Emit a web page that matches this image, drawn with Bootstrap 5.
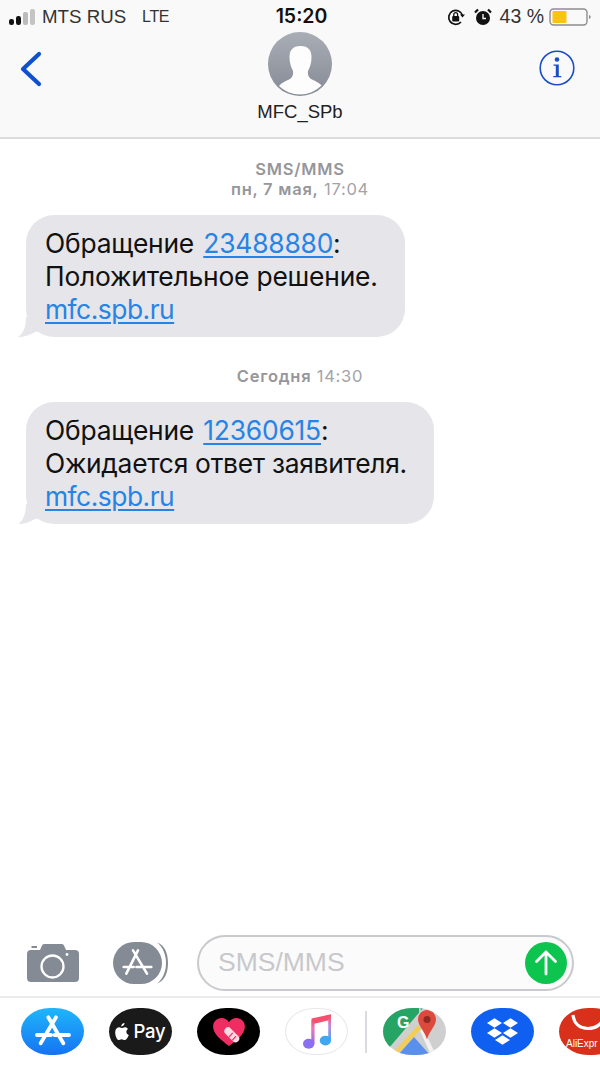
<!DOCTYPE html>
<html lang="ru">
<head>
    <meta charset="UTF-8">
    <meta name="viewport" content="width=device-width, initial-scale=1.0">
    <title>MFC_SPb</title>
    <link href="https://cdn.jsdelivr.net/npm/bootstrap@5.3.0/dist/css/bootstrap.min.css" rel="stylesheet">
    <style>
        html, body { margin: 0; height: 1066px; overflow: hidden; background: #fff; }
        body { font-family: "Liberation Sans", Arial, sans-serif; color: #000; }
        .phone { height: 1066px; width: 600px; }
        .top-head { background: #f9f9f9; height: 139px; border-bottom: 2px solid #dcdcdc; }
        .status-row { height: 32px; display: grid; grid-template-columns: 1fr auto 1fr; align-items: center; font-size: 18.7px; color: #333; padding: 2px 9px 0 9px; }
        .carrier { gap: 4px; }
        .lte { margin-left: 12px; font-size: 16px; letter-spacing: -.4px; }
        .clock { font-family: Inter, "Liberation Sans", sans-serif; font-weight: 600; font-size: 19.5px; color: #111; padding-left: 3px; }
        .stat-right { justify-content: flex-end; }
        .percent { font-size: 19.5px; margin-right: 5px; }
        .head-row { height: 105px; display: grid; grid-template-columns: 1fr auto 1fr; padding: 0 26px; }
        .who { font-size: 18.5px; color: #222; line-height: 22px; }
        .avatar-pic { display: block; margin: 0 auto 5px; }
        .chat { padding: 20px 0 0 0; }
        .stamp { font-family: Inter, "Liberation Sans", sans-serif; font-size: 16.5px; line-height: 20px; color: #a3a3a8; text-align: center; letter-spacing: .75px; }
        .stamp b { font-weight: 600; color: #96969b; }
        .bubble-wrap { position: relative; margin-left: 26px; width: fit-content; }
        .bubble-text { background: #e5e5ea; border-radius: 28px; padding: 12px 27px 11px 19px; font-size: 26.4px; line-height: 33px; color: #111; font-family: Inter, "Liberation Sans", sans-serif; letter-spacing: -.2px; white-space: nowrap; }
        .bubble-text a { color: #2584e6; text-decoration: underline; text-underline-offset: 3px; text-decoration-thickness: 1.5px; }
        .bubble-text a.site-link { letter-spacing: -.5px; }
        .bubble-text a.ref-num { margin-left: 2px; }
        .tight-line { letter-spacing: -.28px; }
        .tail { position: absolute; left: -9px; bottom: 0; }
        .compose { height: 62px; padding: 0 26px 5px 27px; }
        .composer { width: 377px; height: 56px; border: 2px solid #c9c9ce; border-radius: 28px; background: #fbfbfb; margin-left: 28px; padding: 0 5px 0 19px; font-size: 26.5px; color: #c8c8cc; }
        .dock { border-top: 2px solid #ebebeb; height: 70px; padding: 10px 0 0 21px; gap: 25px; overflow: hidden; }
        .dock-pill { width: 63px; height: 47px; border-radius: 29px / 23.5px; flex: 0 0 auto; overflow: hidden; display: flex; align-items: center; justify-content: center; }
        .pay-text { font-family: Inter, "Liberation Sans", sans-serif; color: #fff; font-size: 18.5px; font-weight: 500; letter-spacing: -.2px; }
        .dock-sep { width: 2px; height: 42px; background: #d9dbe0; margin: 3px -9px 0 -8px; flex: 0 0 auto; }
    </style>
</head>
<body>
<div class="phone d-flex flex-column">

    <!-- header -->
    <header class="top-head">
        <div class="status-row">
            <div class="d-flex align-items-center carrier">
                <svg width="29" height="20" viewBox="0 0 29 20"><rect x="0" y="12" width="5" height="6" rx="2.2" fill="#111"/><rect x="7" y="9" width="5" height="9" rx="2.2" fill="#111"/><rect x="14" y="5" width="5" height="13" rx="2" fill="#bbb"/><rect x="21" y="2" width="5" height="16" rx="2" fill="#c4c4c4"/></svg>
                <span>MTS RUS</span><span class="lte">LTE</span>
            </div>
            <div class="clock">15:20</div>
            <div class="d-flex align-items-center stat-right">
                <svg width="20" height="20" viewBox="0 0 20 20" class="me-2"><path d="M16.5 8.5a7 7 0 1 0-1.5 6.500" fill="none" stroke="#111" stroke-width="1.700"/><path d="M14 7.500h5l-2.500 3z" fill="#111"/><rect x="6.200" y="9" width="7" height="5.500" rx="1" fill="#111"/><path d="M7.800 9V7.500a1.900 1.900 0 0 1 3.800 0V9" fill="none" stroke="#111" stroke-width="1.300"/></svg>
                <svg width="18" height="18" viewBox="0 0 18 18" class="me-2"><circle cx="9" cy="10" r="7" fill="#111"/><path d="M9 6v4.500h3" fill="none" stroke="#fff" stroke-width="1.300"/><path d="M1 4.500 4 1.500M17 4.500l-3-3" stroke="#111" stroke-width="2.200"/></svg>
                <span class="percent">43 %</span>
                <svg width="42" height="20" viewBox="0 0 42 20"><rect x="1" y="2" width="37" height="16" rx="3.500" fill="none" stroke="#8d8d8d" stroke-width="1.400"/><rect x="3.500" y="4" width="14" height="12" rx="1" fill="#fdc40e"/><path d="M40 8v4l1.500-1v-2z" fill="#888"/></svg>
            </div>
        </div>
        <div class="head-row">
            <div>
                <svg width="24" height="40" viewBox="0 0 24 40" style="margin:17px 0 0 -6px"><path d="M19 5 3 20 19 35" fill="none" stroke="#0f50d0" stroke-width="4.200" stroke-linecap="round" stroke-linejoin="round"/></svg>
            </div>
            <div class="who text-center">
                <svg class="avatar-pic" width="64" height="64" viewBox="0 0 64 64">
                    <defs><linearGradient id="avGrad" x1="0" y1="0" x2="0" y2="1"><stop offset="0" stop-color="#a9adb6"/><stop offset="1" stop-color="#868a94"/></linearGradient><clipPath id="avClip"><circle cx="32" cy="32" r="30.500"/></clipPath></defs>
                    <circle cx="32" cy="32" r="32" fill="url(#avGrad)"/>
                    <path clip-path="url(#avClip)" d="M32 14c-7 0-10.500 4-10.500 11 0 6 1.500 10 3.500 14 .5 4-.5 6-3 8-4 2-9 4-11 7l-2 10h47l-2-10c-2-3-7-5-11-7-2.500-2-3.500-4-3-8 2-4 3.500-8 3.500-14 0-7-3.500-11-10.500-11z" fill="#fdfdfd"/>
                </svg>
                MFC_SPb
            </div>
            <div class="text-end">
                <svg width="36" height="36" viewBox="0 0 36 36" style="margin:18px -1px 0 0"><circle cx="18" cy="18" r="16.800" fill="none" stroke="#1a4fc4" stroke-width="1.600"/><circle cx="18" cy="9.500" r="2.300" fill="#1a4fc4"/><path d="M14.500 14.500h5.300v11.500h2.500v1.300h-8v-1.300h2.500V15.800h-2.300z" fill="#1a4fc4"/></svg>
            </div>
        </div>
    </header>

    <!-- messages -->
    <main class="chat flex-grow-1">
        <div class="stamp"><b>SMS/MMS</b><br><b>пн, 7 мая,</b> 17:04</div>
        <div class="bubble-wrap mt-3">
            <svg class="tail" width="24" height="24" viewBox="0 0 24 24"><path d="M1 24C6 21 9 14 9 4h15v14l-6 1C13 22 7 24 1 24z" fill="#e5e5ea"/></svg>
            <div class="bubble-text position-relative">Обращение <a class="ref-num" href="#">23488880</a>:<br>Положительное решение.<br><a class="site-link" href="#">mfc.spb.ru</a></div>
        </div>
        <div class="stamp" style="margin-top:29px"><b>Сегодня</b> 14:30</div>
        <div class="bubble-wrap mt-3">
            <svg class="tail" width="24" height="24" viewBox="0 0 24 24"><path d="M1 24C6 21 9 14 9 4h15v14l-6 1C13 22 7 24 1 24z" fill="#e5e5ea"/></svg>
            <div class="bubble-text position-relative">Обращение <a class="ref-num" href="#">12360615</a>:<br><span class="tight-line">Ожидается ответ заявителя.</span><br><a class="site-link" href="#">mfc.spb.ru</a></div>
        </div>
    </main>

    <!-- compose row -->
    <div class="compose d-flex align-items-center">
        <svg width="52" height="38" viewBox="0 0 52 38" class="flex-shrink-0"><path d="M4 6h9l2-4.500a2.500 2.500 0 0 1 2-1.500h18a2.500 2.500 0 0 1 2 1.500l2 4.500h9a4 4 0 0 1 4 4v24a4 4 0 0 1-4 4H4a4 4 0 0 1-4-4V10a4 4 0 0 1 4-4z" fill="#858b95"/><rect x="4.500" y="2" width="5.500" height="2" fill="#858b95"/><circle cx="25.500" cy="22.500" r="11" fill="none" stroke="#fff" stroke-width="2.300"/><circle cx="40" cy="10.500" r="1.400" fill="#fff"/></svg>
        <svg width="56" height="42" viewBox="0 0 56 42" class="flex-shrink-0" style="margin-left:34px"><path d="M44 0.500C52 3 55 12 55 21s-3 18-11 20.500C50 37 53 29 53 21S50 5 44 .5z" fill="#858b95"/><rect x="0" y="0" width="49" height="42" rx="21" ry="21" fill="#858b95"/><g stroke="#fff" stroke-width="2.600" stroke-linecap="round" fill="none"><path d="M25 8.300 13.300 31.700M20 8.300 34 31.700M10.700 25h10M23.500 25h14.800"/></g></svg>
        <div class="composer d-flex align-items-center justify-content-between flex-shrink-0">
            <span>SMS/MMS</span>
            <svg width="42" height="42" viewBox="0 0 42 42"><circle cx="21" cy="21" r="21" fill="#0cc44e"/><path d="M21 32V10M11.500 19.500 21 10l9.500 9.500" fill="none" stroke="#fff" stroke-width="2.800" stroke-linecap="round" stroke-linejoin="round"/></svg>
        </div>
    </div>

    <!-- app strip -->
    <div class="dock d-flex align-items-start">
        <div class="dock-pill" style="background:linear-gradient(#1fb6fb,#1673f2)">
            <svg width="63" height="47" viewBox="0 0 63 47"><g stroke="#fff" stroke-width="3.800" stroke-linecap="round" fill="none"><path d="M35 9.300 19.700 35.300M27.300 9.300 42.300 35.300M16 27h14M33.500 27H48"/></g></svg>
        </div>
        <div class="dock-pill gap-1" style="background:#1a1a1a">
            <svg width="14" height="17" viewBox="0 0 16 20"><path d="M11 0c0 2-1.500 4-4 4 0-2 2-4 4-4zM15 7c-3 2-2 6 1 7-1 3-3 6-5 6-1 0-2-1-3.500-1S5 20 4 20C2 20 0 15 0 11c0-4 2.500-6 5-6 1 0 2.500 1 3 1s2-1 3.500-1c1.500 0 2.700.7 3.500 2z" fill="#fff"/></svg>
            <span class="pay-text">Pay</span>
        </div>
        <div class="dock-pill" style="background:#000">
            <svg width="32" height="28" viewBox="0 0 34 30"><path d="M17 30C8 23 0 17 0 9c0-5 4-9 9-9 3.500 0 6.500 2 8 4.500C18.500 2 21.500 0 25 0c5 0 9 4 9 9 0 8-8 14-17 21z" fill="#ef2d62"/><path d="M16 14 24 22" stroke="#fbdbe3" stroke-width="8" stroke-linecap="round"/><path d="M17 20.500l4-4.500M20.500 24l4-4.500" stroke="#ef2d62" stroke-width="1.300"/></svg>
        </div>
        <div class="dock-pill" style="background:#fff;border:1px solid #e8e8e8">
            <svg width="28" height="35" viewBox="0 0 28.500 35"><defs><linearGradient id="noteGrad" x1="0" y1="0" x2="0" y2="1"><stop offset="0" stop-color="#f5506e"/><stop offset=".35" stop-color="#e87ac0"/><stop offset="1" stop-color="#8a6ff0"/></linearGradient><linearGradient id="noteGrad2" x1="0" y1="0" x2="0" y2="1"><stop offset="0" stop-color="#f5506e"/><stop offset=".4" stop-color="#c08be0"/><stop offset="1" stop-color="#3fa8f2"/></linearGradient></defs><path d="M8.700 4.300 28.500 0v5.500L11.500 9.500V30H8.700z" fill="#f5506e"/><path d="M8.700 6h2.800v24H8.700z" fill="url(#noteGrad)"/><path d="M25.700 2h2.800v25h-2.800z" fill="url(#noteGrad2)"/><ellipse cx="5.800" cy="30" rx="5.800" ry="5" fill="#8a6ff0"/><ellipse cx="22.800" cy="26.700" rx="5.700" ry="5" fill="#3fa8f2"/></svg>
        </div>
        <div class="dock-sep"></div>
        <div class="dock-pill" style="background:#cfcfcf">
            <svg width="63" height="47" viewBox="0 0 63 47"><path d="M0 0h40L0 47z" fill="#25a464"/><path d="M38 0h-2v20L12 47h30L53 47 37 22z" fill="#cfcfcf"/><path d="M8 47 35 17l3 4L14 47z" fill="#f3cd55"/><path d="M15 47 31 29l16 18z" fill="#5a90ec"/><path d="M37 23l3-3 13 27h-5z" fill="#f2f2f2"/><text x="14" y="20" fill="#fff" font-size="16" font-weight="700" font-family="Liberation Sans">G</text><path d="M44 2c5 0 9 4.500 9 9.500 0 6.500-6.500 11-9 20-2.500-9-9-13.500-9-20C35 6.500 39 2 44 2z" fill="#dc4a3d"/><circle cx="44" cy="11.500" r="3.500" fill="#8e2a22"/></svg>
        </div>
        <div class="dock-pill" style="background:#0f60f0">
            <svg width="33" height="27" viewBox="0 0 33 27"><path d="M8.500.300 16 5 8.500 9.700 1 5zM24.500.300 32 5 24.500 9.700 17 5zM8.500 10.300 16 15 8.500 19.700 1 15zM24.500 10.300 32 15 24.500 19.700 17 15zM16.500 17.300 24 22 16.500 26.700 9 22z" fill="#fff"/></svg>
        </div>
        <div class="dock-pill" style="background:#d8301a">
            <svg width="63" height="47" viewBox="0 0 63 47"><path d="M14 7c1 9 7 13.500 15 13.500S44 16 45 7" fill="none" stroke="#fff" stroke-width="3.200"/><text x="7" y="39" fill="#fff" font-size="10" font-family="Liberation Sans">AliExpr</text></svg>
        </div>
    </div>
</div>

<script src="https://cdn.jsdelivr.net/npm/bootstrap@5.3.0/dist/js/bootstrap.bundle.min.js"></script>
</body>
</html>
